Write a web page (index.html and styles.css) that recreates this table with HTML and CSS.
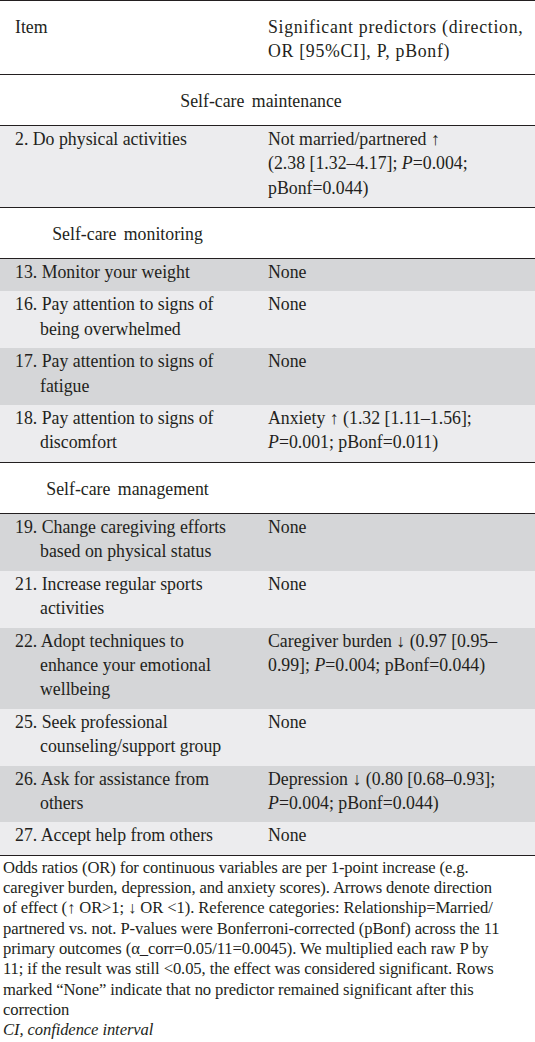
FILE: index.html
```html
<!DOCTYPE html>
<html>
    <head>
        <meta charset="utf-8">
        <title>Significant predictors</title>
        <link rel="stylesheet" href="styles.css">
    </head>
    <body>
        <table class="predictors">
            <colgroup>
                <col class="col-item">
                <col class="col-pred">
            </colgroup>
            <thead>
                <tr>
                    <th>Item</th>
                    <th>Significant predictors (direction, OR [95%CI], P, pBonf)</th>
                </tr>
            </thead>
            <tbody>
                <tr class="section">
                    <td colspan="2" class="center">Self-care maintenance</td>
                </tr>
                <tr class="light">
                    <td>2. Do physical activities</td>
                    <td>Not married/partnered ↑<br>(2.38 [1.32–4.17]; <i>P</i>=0.004; pBonf=0.044)</td>
                </tr>
                <tr class="section">
                    <td class="group">Self-care monitoring</td>
                    <td></td>
                </tr>
                <tr class="dark">
                    <td>13. Monitor your weight</td>
                    <td>None</td>
                </tr>
                <tr class="light">
                    <td>16. Pay attention to signs of being overwhelmed</td>
                    <td>None</td>
                </tr>
                <tr class="dark">
                    <td>17. Pay attention to signs of fatigue</td>
                    <td>None</td>
                </tr>
                <tr class="light">
                    <td>18. Pay attention to signs of discomfort</td>
                    <td>Anxiety ↑ (1.32 [1.11–1.56]; <i>P</i>=0.001; pBonf=0.011)</td>
                </tr>
                <tr class="section">
                    <td class="group">Self-care management</td>
                    <td></td>
                </tr>
                <tr class="dark">
                    <td>19. Change caregiving efforts based on physical status</td>
                    <td>None</td>
                </tr>
                <tr class="light">
                    <td>21. Increase regular sports activities</td>
                    <td>None</td>
                </tr>
                <tr class="dark">
                    <td>22. Adopt techniques to enhance your emotional wellbeing</td>
                    <td>Caregiver burden ↓ (0.97 [0.95–0.99]; <i>P</i>=0.004; pBonf=0.044)</td>
                </tr>
                <tr class="light">
                    <td>25. Seek professional counseling/support group</td>
                    <td>None</td>
                </tr>
                <tr class="dark">
                    <td>26. Ask for assistance from others</td>
                    <td>Depression ↓ (0.80 [0.68–0.93]; <i>P</i>=0.004; pBonf=0.044)</td>
                </tr>
                <tr class="light last">
                    <td>27. Accept help from others</td>
                    <td>None</td>
                </tr>
            </tbody>
        </table>
        <div class="notes">
            <p>Odds ratios (OR) for continuous variables are per 1-point increase (e.g.<br>
            caregiver burden, depression, and anxiety scores). Arrows denote direction<br>
            of effect (↑ OR&gt;1; ↓ OR &lt;1). Reference categories: Relationship=Married/<br>
            partnered vs. not. P-values were Bonferroni-corrected (pBonf) across the 11<br>
            primary outcomes (α_corr=0.05/11=0.0045). We multiplied each raw P by<br>
            11; if the result was still &lt;0.05, the effect was considered significant. Rows<br>
            marked “None” indicate that no predictor remained significant after this<br>
            correction</p>
            <p class="abbr">CI, confidence interval</p>
        </div>
    </body>
</html>
```
FILE: styles.css
```css
* {
    padding: 0;
    margin: 0;
}
body {
    font-family: "Liberation Serif", "Times New Roman", serif;
    color: #231f20;
    background: #fff;
}
.predictors {
    width: 535px;
    border-collapse: collapse;
    table-layout: fixed;
    font-size: 17.8px;
    line-height: 24.4px;
    border-top: 1px solid #231f20;
}
.col-item {
    width: 255px;
}
.predictors th {
    font-weight: normal;
    text-align: left;
    vertical-align: top;
    padding: 14px 4px 10px 15px;
    border-bottom: 1px solid #231f20;
}
.predictors th + th {
    padding-left: 13px;
    letter-spacing: 0.7px;
}
.predictors td {
    vertical-align: top;
    padding: 1px 15px 7px 40px;
    text-indent: -25px;
}
.predictors td + td {
    padding-left: 13px;
    padding-right: 4px;
    text-indent: 0;
}
.section td {
    padding: 14px 0 11.6px;
    text-indent: 0;
    border-top: 1px solid #231f20;
    border-bottom: 1px solid #231f20;
}
.section td.center,
.section td.group {
    text-align: center;
    padding-left: 0;
    padding-right: 0;
    word-spacing: 3px;
}
.section td.center {
    padding-right: 13px;
}
.light {
    background: #ececee;
}
.dark {
    background: #d5d6d8;
}
.last td {
    border-bottom: 1px solid #231f20;
}
.notes {
    padding: 2px 0 0 3px;
    font-size: 16.6px;
    line-height: 20.3px;
    letter-spacing: -0.1px;
    white-space: nowrap;
}
.abbr {
    font-style: italic;
}
```
